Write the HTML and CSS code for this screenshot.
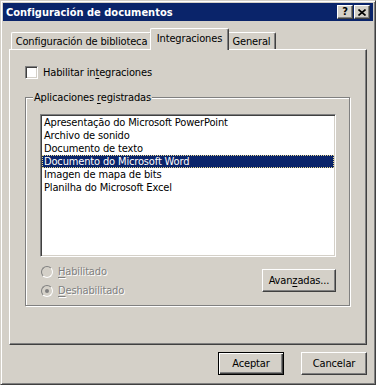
FILE: index.html
```html
<!DOCTYPE html>
<html lang="es">
<head>
<meta charset="utf-8">
<title>Configuración de documentos</title>
<link rel="stylesheet" href="styles.css">
</head>
<body>
<div class="window">
  <div class="titlebar">
    <span class="title">Configuración de documentos</span>
    <div class="tb-buttons">
      <span class="tb-btn q">?</span>
      <span class="tb-btn">
        <svg width="8" height="7" viewBox="0 0 8 7"><path d="M0.5 0.5 L7.5 6.5 M7.5 0.5 L0.5 6.5" stroke="#000" stroke-width="1.6" fill="none"/></svg>
      </span>
    </div>
  </div>
  <div class="content">
    <div class="tabs">
      <div class="tab t1">Configuración de biblioteca</div>
      <div class="tab t2 active">Integraciones</div>
      <div class="tab t3">General</div>
    </div>
    <div class="panel">
      <div class="check">
        <span class="box"></span>
        <span>Habilitar in<u>t</u>egraciones</span>
      </div>
      <div class="group">
        <span class="legend">Aplicaciones <u>r</u>egistradas</span>
        <div class="listbox">
          <div class="item">Apresentação do Microsoft PowerPoint</div>
          <div class="item">Archivo de sonido</div>
          <div class="item">Documento de texto</div>
          <div class="item sel">Documento do Microsoft Word</div>
          <div class="item">Imagen de mapa de bits</div>
          <div class="item">Planilha do Microsoft Excel</div>
        </div>
        <div class="bottom-row">
          <div class="radios">
            <div class="radio"><span class="circle"></span><span class="dis"><u>H</u>abilitado</span></div>
            <div class="radio"><span class="circle checked"></span><span class="dis"><u>D</u>eshabilitado</span></div>
          </div>
          <button class="btn adv">Avan<u>z</u>adas...</button>
        </div>
      </div>
    </div>
    <div class="actions">
      <button class="btn default">Aceptar</button>
      <button class="btn">Cancelar</button>
    </div>
  </div>
</div>
</body>
</html>
```
FILE: styles.css
```css
* { box-sizing: border-box; }
html, body { margin: 0; padding: 0; }
body {
  width: 376px;
  height: 385px;
  background: #d4d0c8;
  font-family: "DejaVu Sans Condensed", "Liberation Sans", sans-serif;
  font-size: 11px;
  line-height: 13px;
  letter-spacing: -0.15px;
  color: #000;
}
u { text-decoration-thickness: 1px; text-underline-offset: 2px; }
.window {
  width: 376px;
  height: 385px;
  background: #d4d0c8;
  border: 1px solid;
  border-color: #d4d0c8 #404040 #404040 #d4d0c8;
  box-shadow: inset 1px 1px 0 #fff, inset -1px -1px 0 #808080;
  padding: 2px;
  display: flex;
  flex-direction: column;
}
.titlebar {
  height: 18px;
  flex: none;
  background: #0a246a;
  color: #fff;
  font-weight: bold;
  letter-spacing: 0;
  display: flex;
  align-items: center;
  justify-content: space-between;
  padding: 0 3px 0 2px;
}
.title { padding-left: 1px; }
.tb-buttons { display: flex; gap: 1px; }
.tb-btn {
  width: 16px;
  height: 14px;
  background: #d4d0c8;
  border: 1px solid;
  border-color: #fff #404040 #404040 #fff;
  box-shadow: inset -1px -1px 0 #808080;
  display: flex;
  align-items: center;
  justify-content: center;
  color: #000;
  font-size: 11px;
  line-height: 12px;
}
.tb-btn svg { display: block; }
.content {
  flex: 1;
  padding: 7px 6px 0;
  display: flex;
  flex-direction: column;
}
.tabs {
  height: 21px;
  display: flex;
  align-items: flex-end;
  padding-left: 2px;
  position: relative;
  z-index: 1;
}
.tab {
  height: 17px;
  background: #d4d0c8;
  border: 1px solid;
  border-bottom: none;
  border-color: #fff #404040 #404040 #fff;
  box-shadow: inset -1px 0 0 #808080;
  border-radius: 2px 2px 0 0;
  text-align: center;
  padding-top: 2px;
  white-space: nowrap;
}
.t1 { width: 141px; }
.t2 {
  width: 79px;
  height: 22px;
  margin: 0 -2px -1px;
  padding-top: 3px;
  position: relative;
  z-index: 2;
}
.t3 { width: 49px; }
.panel {
  height: 296px;
  flex: none;
  border: 1px solid;
  border-color: #fff #404040 #404040 #fff;
  box-shadow: inset -1px -1px 0 #808080;
  padding: 16px 16px 0 15px;
}
.check {
  display: flex;
  align-items: center;
  gap: 5px;
  height: 13px;
}
.box {
  width: 13px;
  height: 13px;
  background: #fff;
  border: 1px solid;
  border-color: #808080 #fff #fff #808080;
  box-shadow: inset 1px 1px 0 #404040, inset -1px -1px 0 #d4d0c8;
}
.group {
  position: relative;
  margin-top: 18px;
  border: 1px solid #808080;
  box-shadow: inset 1px 1px 0 #fff, 1px 1px 0 #fff;
  padding: 16px 13px 8px 14px;
}
.legend {
  position: absolute;
  top: -7px;
  left: 7px;
  background: #d4d0c8;
  padding: 0 1px;
  line-height: 13px;
}
.listbox {
  height: 143px;
  background: #fff;
  border: 1px solid;
  border-color: #808080 #fff #fff #808080;
  box-shadow: inset 1px 1px 0 #404040, inset -1px -1px 0 #d4d0c8;
  padding: 1px;
}
.item {
  height: 13px;
  line-height: 13px;
  padding-left: 2px;
  white-space: nowrap;
}
.item.sel {
  background: #0a246a;
  color: #fff;
  outline: 1px dotted #e8d88c;
  outline-offset: -1px;
}
.bottom-row {
  display: flex;
  justify-content: space-between;
  align-items: flex-start;
  margin-top: 8px;
}
.radios {
  display: flex;
  flex-direction: column;
  gap: 6px;
  padding-left: 1px;
}
.radio {
  display: flex;
  align-items: center;
  gap: 5px;
  height: 13px;
}
.circle {
  width: 12px;
  height: 12px;
  border-radius: 50%;
  border: 1px solid;
  border-color: #808080 #fff #fff #808080;
  background: #d4d0c8;
  display: flex;
  align-items: center;
  justify-content: center;
}
.circle.checked::after {
  content: "";
  width: 4px;
  height: 4px;
  border-radius: 50%;
  background: #808080;
}
.dis {
  color: #808080;
  text-shadow: 1px 1px 0 #fff;
}
.btn {
  width: 66px;
  height: 23px;
  padding: 0;
  font: inherit;
  letter-spacing: inherit;
  color: #000;
  background: #d4d0c8;
  border: 1px solid;
  border-color: #fff #404040 #404040 #fff;
  box-shadow: inset -1px -1px 0 #808080;
  border-radius: 0;
}
.btn.default {
  border-color: #000;
  box-shadow: inset 1px 1px 0 #fff, inset -1px -1px 0 #404040, inset -2px -2px 0 #808080;
}
.btn.adv {
  width: 74px;
  margin-top: 4px;
}
.actions {
  display: flex;
  justify-content: flex-end;
  gap: 17px;
  margin-top: 7px;
}
```
